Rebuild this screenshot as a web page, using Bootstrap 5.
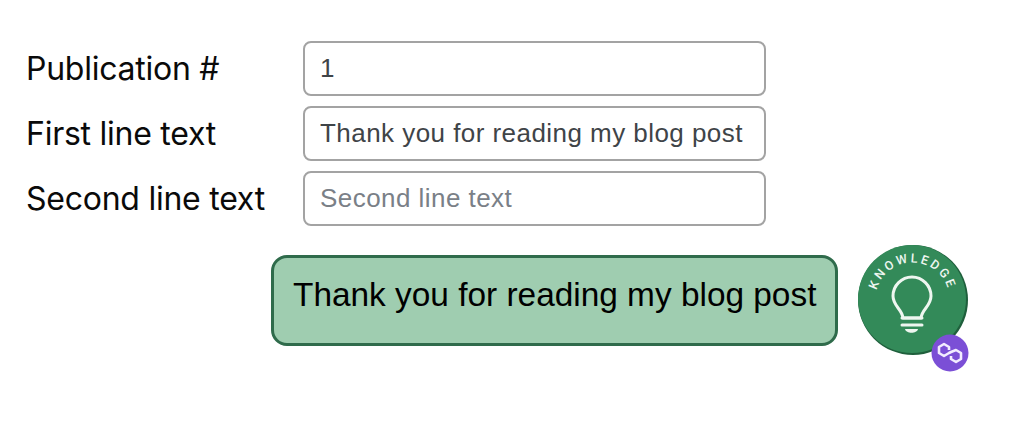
<!doctype html>
<html lang="en">
<head>
    <meta charset="utf-8" />
    <meta content="width=device-width, initial-scale=1" name="viewport" />
    <title>Publication</title>
    <link href="https://cdn.jsdelivr.net/npm/bootstrap@5.3.6/dist/css/bootstrap.min.css" rel="stylesheet" />
    <style>
        body {
            background-color: #fff;
            color: #000;
            font-family: "Liberation Sans", Arial, sans-serif;
        }

        .pub-page {
            padding: 41px 0 0 26px;
        }

        .pub-form {
            gap: 10px;
            width: 740px;
        }

        .pub-label {
            width: 277px;
            margin: 0;
            font-family: Inter, "Liberation Sans", sans-serif;
            font-size: 32px;
            letter-spacing: -0.25px;
            color: #0a0a0a;
        }

        .pub-input.form-control {
            width: 463px;
            height: 55px;
            padding: 0 15px;
            border: 2px solid #a3a3a3;
            border-radius: 8px;
            font-size: 26px;
            letter-spacing: 0.45px;
            color: #3f4448;
        }

        .pub-input.form-control::placeholder {
            color: #7a8087;
            opacity: 1;
        }

        .pub-result {
            margin: 29px 0 0 245px;
        }

        .pub-bubble {
            width: 567px;
            height: 91px;
            padding: 0 19px 10px 19px;
            background-color: #9fcdb0;
            border: 3px solid #2f6b4b;
            border-radius: 16px;
            font-size: 33.4px;
            white-space: nowrap;
        }

        .pub-badge {
            margin: -11px 0 0 19px;
            width: 114px;
            height: 128px;
            flex: none;
        }
    </style>
</head>
<body>

<div class="pub-page">
    <form class="pub-form d-flex flex-column">
        <div class="d-flex align-items-center">
            <label class="pub-label" for="pubNumber">Publication #</label>
            <input class="form-control pub-input" id="pubNumber" type="text" value="1" />
        </div>
        <div class="d-flex align-items-center">
            <label class="pub-label" for="pubFirst">First line text</label>
            <input class="form-control pub-input" id="pubFirst" type="text" value="Thank you for reading my blog post" />
        </div>
        <div class="d-flex align-items-center">
            <label class="pub-label" for="pubSecond">Second line text</label>
            <input class="form-control pub-input" id="pubSecond" type="text" placeholder="Second line text" />
        </div>
    </form>

    <div class="pub-result d-flex align-items-start">
        <div class="pub-bubble d-flex align-items-center">Thank you for reading my blog post</div>
        <svg class="pub-badge" viewBox="0 0 114 128" aria-label="Knowledge badge">
            <defs>
                <path id="badgeArc" d="M18.5 55.5 A37 37 0 0 1 92.5 55.5" />
            </defs>
            <circle cx="56" cy="56" r="55" fill="#1f5f3c" />
            <circle cx="55" cy="55" r="54" fill="#338a59" />
            <text font-family="Roboto, sans-serif" font-size="12.5" font-weight="500" fill="#eef6f0" letter-spacing="2.6" text-anchor="middle">
                <textPath href="#badgeArc" startOffset="50%">KNOWLEDGE</textPath>
            </text>
            <path d="M46 74 C45 65 36 62 36 52 A19 19 0 0 1 74 52 C74 62 65 65 64 74 Z" fill="none" stroke="#eef6f0" stroke-width="3" stroke-linejoin="round" />
            <path d="M45 74 H65 M45 81 H65" fill="none" stroke="#eef6f0" stroke-width="3" stroke-linecap="round" />
            <path d="M48 85 H61 C60 90 49 90 48 85 Z" fill="#eef6f0" />
            <circle cx="93" cy="109" r="18.5" fill="#7b4fd6" />
            <path d="M92 106 V103 L87 100 L82 103 V109 L87 112 L92 109 L94 108 L99 106 L104 109 V115 L99 118 L94 115 V112" fill="none" stroke="#f2ecff" stroke-width="2.6" stroke-linejoin="round" />
        </svg>
    </div>
</div>

<script src="https://cdn.jsdelivr.net/npm/bootstrap@5.3.6/dist/js/bootstrap.bundle.min.js"></script>
</body>
</html>
